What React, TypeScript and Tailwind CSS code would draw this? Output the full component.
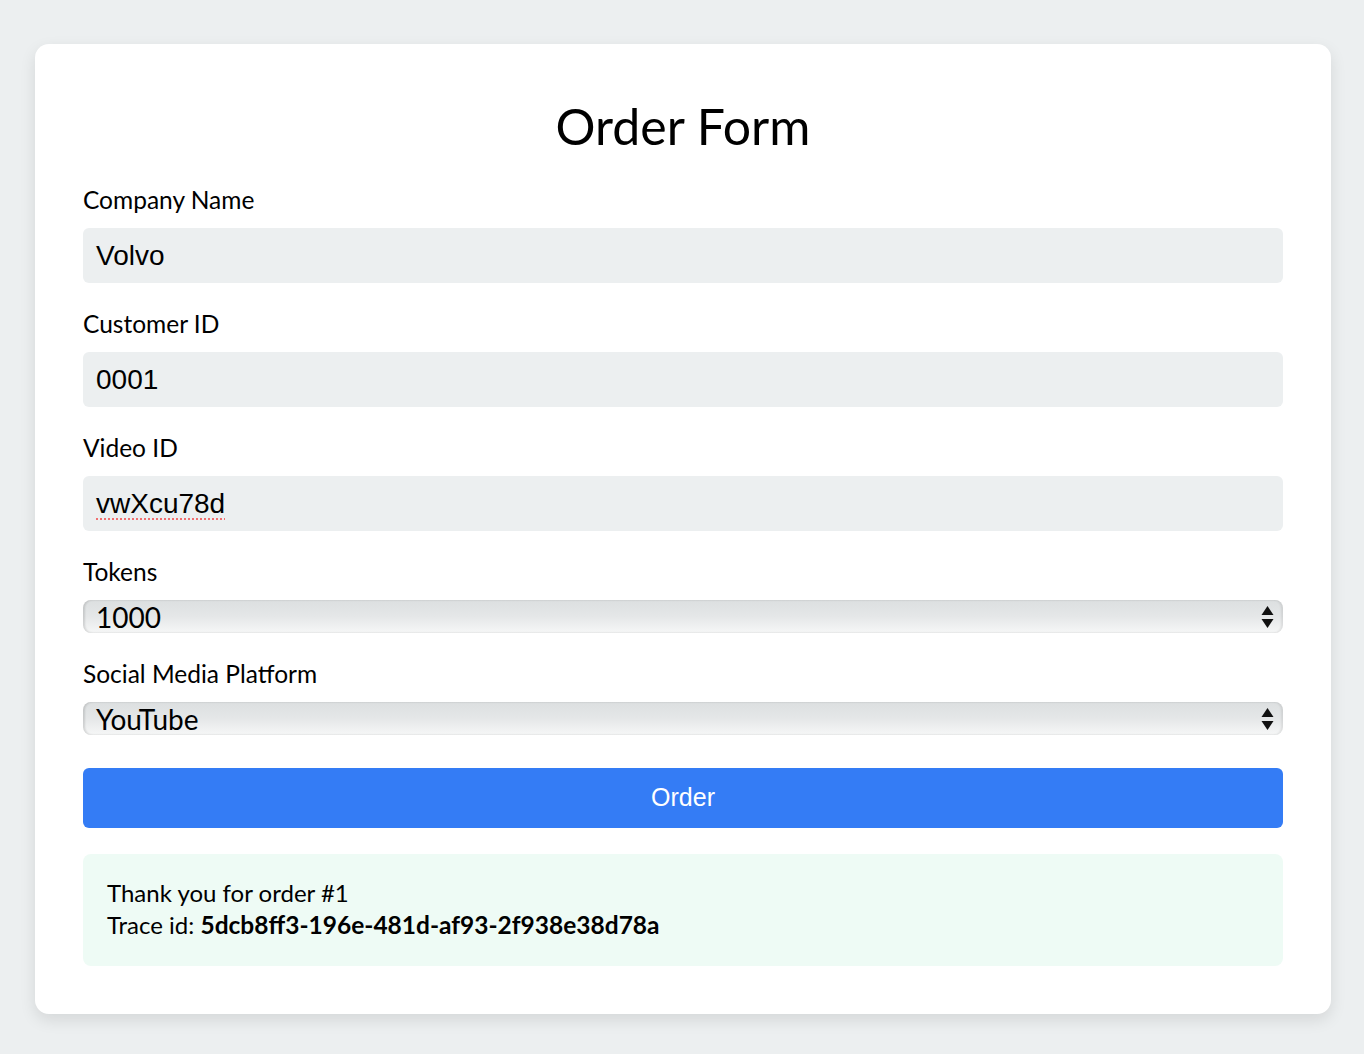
import React from 'react';

const sans = "font-['Lato','Noto_Sans',sans-serif]";
const inputFont = "font-['Liberation_Sans',Arial,sans-serif]";

function Label({ children }: { children: React.ReactNode }) {
  return (
    <label className={`block text-[24.5px] leading-[28px] text-black mb-[14px] ${sans}`}>
      {children}
    </label>
  );
}

function TextField({ label, value, misspelled }: { label: string; value: string; misspelled?: boolean }) {
  return (
    <div className="mb-[27px]">
      <Label>{label}</Label>
      <div className={`h-[55px] rounded-md bg-[#eceff0] px-[13px] flex items-center text-[28px] text-black ${inputFont}`}>
        <span
          className={
            misspelled
              ? 'underline decoration-dotted decoration-[#f07070] decoration-[2px] underline-offset-[6px]'
              : ''
          }
        >
          {value}
        </span>
      </div>
    </div>
  );
}

function Arrows() {
  return (
    <svg width="13" height="24" viewBox="0 0 13 24" className="shrink-0">
      <path d="M6.5 1 L12.5 10 L0.5 10 Z" fill="#111" />
      <path d="M0.5 14 L12.5 14 L6.5 23 Z" fill="#111" />
    </svg>
  );
}

function SelectField({ label, value, last }: { label: string; value: string; last?: boolean }) {
  return (
    <div className={last ? 'mb-[33px]' : 'mb-[27px]'}>
      <Label>{label}</Label>
      <div className="h-[33px] rounded-[8px] bg-linear-to-b from-[#dcdfe0] via-[#e5e7e8] to-[#f6f7f7] shadow-[inset_2px_0_2px_rgba(0,0,0,0.12),inset_-2px_0_2px_rgba(0,0,0,0.08)] pl-[13px] pr-[9px] flex items-center justify-between">
        <span className={`text-[28px] leading-none text-black ${sans}`}>{value}</span>
        <Arrows />
      </div>
    </div>
  );
}

export default function App() {
  return (
    <div className="min-h-[1054px] bg-[#eceff0] pt-[44px] pb-[40px] pl-[35px] pr-[33px]">
      <div className="bg-white rounded-[14px] shadow-[0_6px_16px_rgba(0,0,0,0.10)] pt-[52px] pb-[48px] px-[48px]">
        <h1 className={`text-center text-[50px] leading-[60px] text-black mb-[30px] ${sans}`}>Order Form</h1>

        <TextField label="Company Name" value="Volvo" />
        <TextField label="Customer ID" value="0001" />
        <TextField label="Video ID" value="vwXcu78d" misspelled />
        <SelectField label="Tokens" value="1000" />
        <SelectField label="Social Media Platform" value="YouTube" last />

        <button
          type="button"
          className={`w-full h-[60px] rounded-md bg-[#347cf5] text-white text-[25px] ${inputFont} mb-[26px]`}
        >
          Order
        </button>

        <div className={`rounded-lg bg-[#eefbf5] px-6 pt-[23px] pb-[25px] text-[24px] leading-[32px] text-black ${sans}`}>
          <div>Thank you for order #1</div>
          <div>
            Trace id: <span className="font-bold text-[24.5px]">5dcb8ff3-196e-481d-af93-2f938e38d78a</span>
          </div>
        </div>
      </div>
    </div>
  );
}
